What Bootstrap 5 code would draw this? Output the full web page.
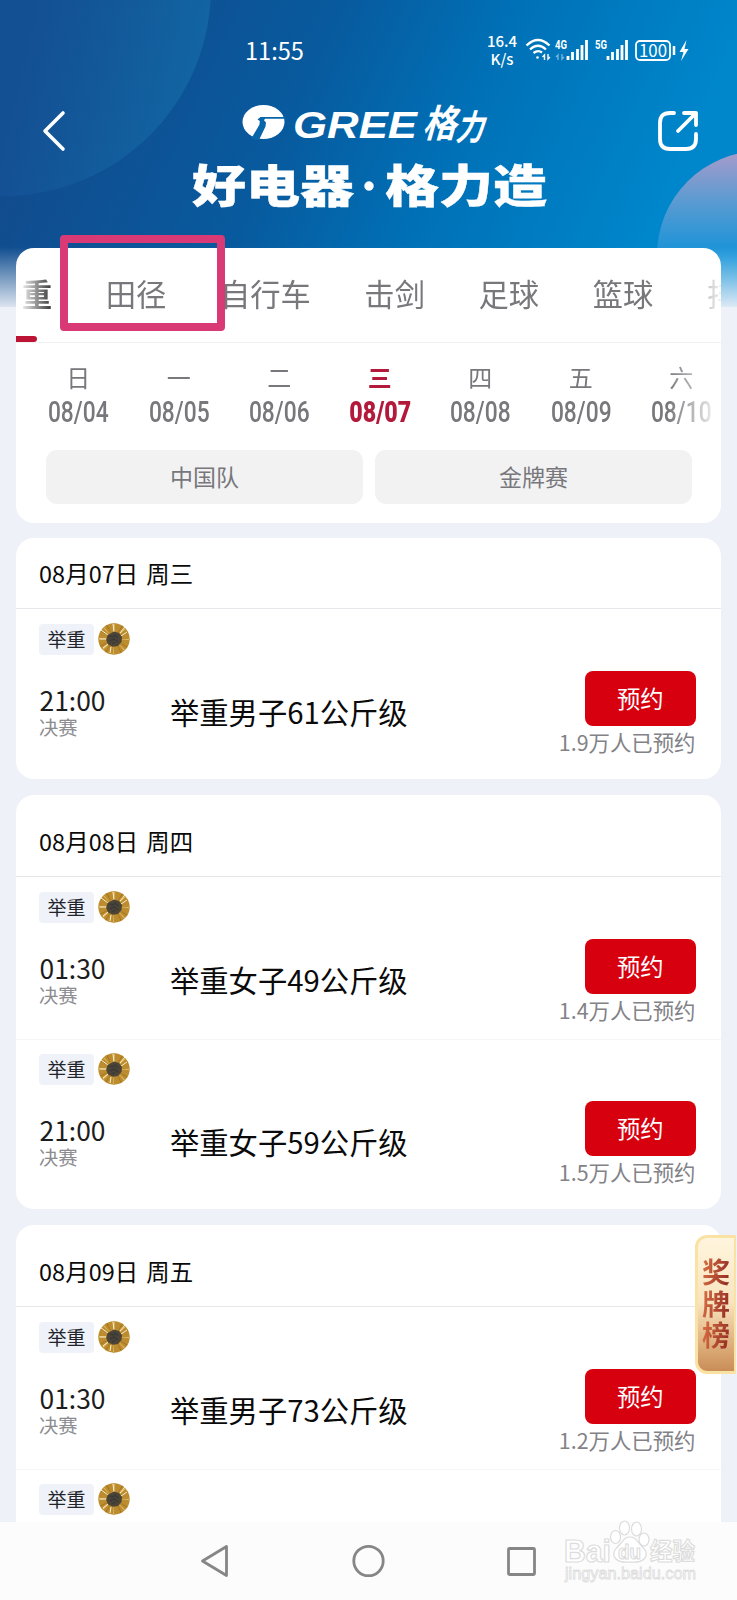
<!DOCTYPE html>
<html lang="zh-CN">
<head>
<meta charset="utf-8">
<meta name="viewport" content="width=device-width, initial-scale=1">
<title>赛程</title>
<link href="https://cdn.jsdelivr.net/npm/bootstrap@5.3.0/dist/css/bootstrap.min.css" rel="stylesheet">
<style>
  body { font-family: "Noto Sans CJK SC", sans-serif; background: #eef1f7; color: #0a0a0a; }
  .screen { height: 1600px; width: 737px; }
  .text-dim { color: #77777c; }
  .backdrop { height: 307px; z-index: 0; }
  .statusbar { height: 86px; padding: 32px 46px 0 245px; }
  .clock { font-size: 23.6px; line-height: 37px; }
  .speed { font-size: 15px; line-height: 18px; font-weight: 500; }
  .banner { height: 162px; padding: 16px 37px 0 40px; }
  .brand { margin: 0 auto 0 125px; }
  .panel { border-radius: 18px; margin: 0 16px; width: 705px; }
  .filter-panel { height: 275px; }
  .sport-tabs { height: 95px; border-bottom: 1px solid #f1f1f2; }
  .sport-scroll { gap: 53.6px; font-size: 30.3px; line-height: 90px; padding-left: 90px; margin-left: -84.500px;
    width: 790px; -webkit-mask-image: linear-gradient(90deg, transparent 87px, #000 123px, #000 748px, transparent 794px);
    mask-image: linear-gradient(90deg, transparent 87px, #000 123px, #000 748px, transparent 794px); }
  .sport-scroll .current { color: #222; font-weight: 700; margin-left: -30px; }
  .tab-mark { left: 0; bottom: 0; width: 21px; height: 6px; background: #bd1436; border-radius: 0 3px 3px 0; }
  .day-strip { height: 107px; padding: 16px 0 0 12px;
    -webkit-mask-image: linear-gradient(90deg, #000 652px, transparent 705px);
    mask-image: linear-gradient(90deg, #000 652px, transparent 705px); }
  .day { width: 100.5px; font-size: 24px; line-height: 35px; color: #77777c; }
  .day .num { display: block; font: 500 29px/37px Roboto, sans-serif; transform: scaleX(.785); }
  .day.today { color: #b3193a; font-weight: 700; }
  .day.today .num { font-weight: 900; transform: scaleX(.8); }
  .filters { padding: 0 29px 0 30px; gap: 12px; }
  .filter-btn { height: 54px; border: 0; border-radius: 11px; background: #f2f2f3; color: #77777c; font-size: 23px; line-height: 28px; padding-bottom: 9px; }
  .date-head { height: 71px; padding: 2px 23px 0; font-size: 23.4px; word-spacing: 2.5px; letter-spacing: .1px; border-bottom: 1px solid #e6e7ea; }
  .date-head.tall { height: 82px; padding-top: 13px; }
  .event { height: 162px; padding: 14px 25.5px 0 23px; }
  .sport-tag { height: 31px; width: 55px; font-size: 19px; line-height: 30px; background: #eff2f8; color: #22242c; border-radius: 4px; }
  .when { width: 131px; padding-top: 31px; }
  .clock-time { font-size: 26.4px; line-height: 28px; color: #1d1d20; padding-left: .5px; }
  .stage { font-size: 19.3px; line-height: 27px; color: #8b8b90; }
  .event + .event { box-shadow: inset 0 1px #f6f6f7; }
  .event-name { font-size: 29.3px; line-height: 40px; padding-top: 36px; }
  .book-btn { width: 110.5px; height: 55px; background: #d7000f; color: #fff; border: 0; border-radius: 8px; font-size: 23.3px; line-height: 28px; padding-bottom: 8px; }
  .booked { font-size: 21.4px; line-height: 31px; color: #828287; }
  .navbar-keys { height: 78px; background: #fcfcfc; bottom: 0; }
  .medal-flag { left: 695px; top: 1235px; width: 41px; height: 139px; border: 3px solid #f9e2a4; border-right-width: 2px; border-radius: 12px 0 0 12px; padding-bottom: 2px;
    background: linear-gradient(#fff5dd, #f8e4bf 48%, #deb07c 80%, #c98d57); }
  .medal-flag span { font-size: 28px; line-height: 31.5px; font-weight: 700; color: transparent;
    background: linear-gradient(100deg, #dc7245, #8e2822); -webkit-background-clip: text; background-clip: text; }
  .highlight-frame { left: 60px; top: 235px; width: 165px; height: 96px; border: 8px solid #d93a76; border-radius: 4px; }
  .watermark { left: 560px; top: 1516px; }
</style>
</head>
<body>
<svg width="0" height="0" class="position-absolute" aria-hidden="true">
  <defs>
    <symbol id="medal" viewBox="0 0 32 32">
      <circle cx="16" cy="16" r="15.7" fill="#bd8c2e"/>
      <g fill="none">
        <circle cx="16" cy="16" r="11.5" stroke="#9c7222" stroke-width="8" stroke-dasharray=".7 5.300"/>
        <circle cx="16" cy="16" r="11.5" stroke="#e2c372" stroke-width="7.500" stroke-dasharray=".7 8.300"/>
        <path d="M15 1l1 8M3 7l7 5M1.500 16l7 0M5 25l5-4M29 9l-6 4M27 4l-5 6M12 30l1-6" stroke="#fff4d0" stroke-width="1"/>
      </g>
      <path d="M16 8.500l5 1.500 3 4-.5 5-3.500 4-5 .8-5-2.300-1.800-4.500 1.300-5z" fill="#4c4537"/>
      <path d="M12 13l3 1 2-2 3 3M12 18l4-2 4 3M14 21l3-2" stroke="#38393a" stroke-width="1.500" fill="none"/>
    </symbol>
  </defs>
</svg>

<div class="screen position-relative overflow-hidden">
  <svg class="backdrop position-absolute top-0 start-0" width="737" height="307" viewBox="0 0 737 307" aria-hidden="true">
    <defs>
      <linearGradient id="sky" gradientUnits="userSpaceOnUse" x1="60" y1="70" x2="610" y2="320">
        <stop offset="0" stop-color="#114c8e"/><stop offset=".38" stop-color="#085a9e"/>
        <stop offset=".65" stop-color="#0071b7"/><stop offset="1" stop-color="#0086cb"/>
      </linearGradient>
      <linearGradient id="orbL" gradientUnits="userSpaceOnUse" x1="20" y1="60" x2="190" y2="100">
        <stop offset="0" stop-color="#134f93"/><stop offset="1" stop-color="#1264a2"/>
      </linearGradient>
      <linearGradient id="orbR" x1="0" y1="150" x2="0" y2="260" gradientUnits="userSpaceOnUse">
        <stop offset="0" stop-color="#aa9bcb"/><stop offset=".45" stop-color="#5d9bd1"/><stop offset="1" stop-color="#0f92d9"/>
      </linearGradient>
      <linearGradient id="fade" x1="0" y1="0" x2="0" y2="1">
        <stop offset="0" stop-color="#eef1f7" stop-opacity="0"/><stop offset="1" stop-color="#eef1f7" stop-opacity=".92"/>
      </linearGradient>
    </defs>
    <rect width="737" height="307" fill="url(#sky)"/>
    <circle cx="3" cy="-12" r="208" fill="url(#orbL)"/>
    <circle cx="761" cy="255" r="104" fill="url(#orbR)"/>
    <rect y="247" width="737" height="60" fill="url(#fade)"/>
  </svg>

  <header class="position-relative text-white">
    <div class="statusbar d-flex justify-content-between align-items-start">
      <div class="clock">11:55</div>
      <div class="d-flex align-items-start">
        <div class="speed text-center">16.4<br>K/s</div>
        <svg class="ms-2 mt-1" width="166" height="30" viewBox="0 4 166 30" fill="none" stroke="#fff">
          <g stroke-width="2.300">
            <path d="M1.500 13.500Q13 2.500 24.500 13.500M5 17.500Q13 10 21 17.500M8.500 21Q13 17.500 17 20.500"/>
            <circle cx="12.500" cy="25.500" r="1.300" fill="#fff" stroke="none"/>
          </g>
          <path d="M19.500 28v-5l-2 2M23 22v5l2-2" stroke-width="1.400"/>
          <text x="30" y="17" font-family="Roboto" font-weight="700" font-size="12.500" textLength="12" lengthAdjust="spacingAndGlyphs" fill="#fff" stroke="none">4G</text>
          <path d="M33 28v-5l-2 2M37 22v5l2-2" stroke-width="1.400" opacity=".45"/>
          <path d="M43 28v-4M47.500 28v-8M52.500 28v-11M57 28v-15M61.500 28v-20" stroke-width="2.800"/>
          <text x="70" y="17" font-family="Roboto" font-weight="700" font-size="12.500" textLength="12" lengthAdjust="spacingAndGlyphs" fill="#fff" stroke="none">5G</text>
          <path d="M83 28v-4M87.500 28v-8M92.500 28v-11M97 28v-15M101.500 28v-20" stroke-width="2.800"/>
          <rect x="111" y="9" width="34" height="19" rx="4" stroke-width="1.800"/>
          <path d="M149 14v9" stroke-width="2.500"/>
          <text x="114" y="24.500" font-family="Noto Sans CJK SC" font-size="17" textLength="28" lengthAdjust="spacingAndGlyphs" fill="#fff" stroke="none">100</text>
          <path d="M161.500 8l-7 12h4l-2.500 9 7.500-12h-4z" fill="#fff" stroke="none"/>
        </svg>
      </div>
    </div>
    <div class="banner d-flex justify-content-between align-items-start">
      <svg width="27" height="58" viewBox="0 0 27 58" fill="none" stroke="#fff" stroke-width="3.600" stroke-linecap="round" stroke-linejoin="round"><path d="M23 11L5 29l18 18"/></svg>
      <svg class="brand" width="360" height="112" viewBox="0 0 360 112" fill="#fff">
        <ellipse cx="71.500" cy="20" rx="21" ry="17"/>
        <path d="M68.500 15H94v1.800H73l-1 1.400 2 2.300-.5 4L67 38l-8-1 8.500-14.500.3-3.500-2.300-1.500z" fill="#0866ab"/>
        <text x="101" y="35.500" font-family="Liberation Sans" font-weight="700" font-style="italic" font-size="36" textLength="124" lengthAdjust="spacingAndGlyphs">GREE</text>
        <g transform="translate(226 0) skewX(-16)" font-family="Noto Sans CJK SC" font-weight="700">
          <text x="14" y="35" font-size="38" textLength="34" lengthAdjust="spacingAndGlyphs">格</text>
          <text x="48" y="38" font-size="35" textLength="28" lengthAdjust="spacingAndGlyphs">力</text>
        </g>
        <g font-family="Noto Sans CJK SC" font-weight="900" font-size="45" stroke="#fff" stroke-width=".4">
          <text x="0" y="100.500" textLength="162" lengthAdjust="spacingAndGlyphs">好电器</text>
          <circle cx="177" cy="84" r="4.500"/>
          <text x="193" y="100.500" textLength="162" lengthAdjust="spacingAndGlyphs">格力造</text>
        </g>
      </svg>
      <svg width="44" height="58" viewBox="0 0 44 58" fill="none" stroke="#fff" stroke-width="3.800" stroke-linecap="round" stroke-linejoin="round"><path d="M18 11h-4Q4 11 4 21v16Q4 47 14 47h16Q40 47 40 37v-5M22 29l18-18M28 11h12v12"/></svg>
    </div>
  </header>

  <section class="panel filter-panel bg-white position-relative">
    <nav class="sport-tabs position-relative overflow-hidden">
      <div class="sport-scroll d-flex text-nowrap text-dim">
        <span class="current">举重</span><span>田径</span><span>自行车</span><span>击剑</span><span>足球</span><span>篮球</span><span>排球</span>
      </div>
      <div class="tab-mark position-absolute"></div>
    </nav>
    <div class="day-strip d-flex text-center overflow-hidden">
      <div class="day flex-shrink-0">日<span class="num">08/04</span></div>
      <div class="day flex-shrink-0">一<span class="num">08/05</span></div>
      <div class="day flex-shrink-0">二<span class="num">08/06</span></div>
      <div class="day today flex-shrink-0">三<span class="num">08/07</span></div>
      <div class="day flex-shrink-0">四<span class="num">08/08</span></div>
      <div class="day flex-shrink-0">五<span class="num">08/09</span></div>
      <div class="day flex-shrink-0">六<span class="num">08/10</span></div>
    </div>
    <div class="filters d-flex">
      <button class="btn filter-btn flex-fill w-50">中国队</button>
      <button class="btn filter-btn flex-fill w-50">金牌赛</button>
    </div>
  </section>

  <section class="panel bg-white pb-2" style="margin-top:15px">
    <div class="date-head d-flex align-items-center">08月07日 周三</div>
    <article class="event">
      <div class="d-flex align-items-center gap-1"><span class="sport-tag text-center">举重</span><svg width="32" height="32"><use href="#medal"/></svg></div>
      <div class="d-flex">
        <div class="when"><div class="clock-time">21:00</div><div class="stage">决赛</div></div>
        <div class="event-name flex-grow-1">举重男子61公斤级</div>
        <div class="d-flex flex-column align-items-end pt-3"><button class="btn book-btn">预约</button><div class="booked">1.9万人已预约</div></div>
      </div>
    </article>
  </section>

  <section class="panel bg-white pb-2 mt-3">
    <div class="date-head tall d-flex align-items-center">08月08日 周四</div>
    <article class="event">
      <div class="d-flex align-items-center gap-1"><span class="sport-tag text-center">举重</span><svg width="32" height="32"><use href="#medal"/></svg></div>
      <div class="d-flex">
        <div class="when"><div class="clock-time">01:30</div><div class="stage">决赛</div></div>
        <div class="event-name flex-grow-1">举重女子49公斤级</div>
        <div class="d-flex flex-column align-items-end pt-3"><button class="btn book-btn">预约</button><div class="booked">1.4万人已预约</div></div>
      </div>
    </article>
    <article class="event">
      <div class="d-flex align-items-center gap-1"><span class="sport-tag text-center">举重</span><svg width="32" height="32"><use href="#medal"/></svg></div>
      <div class="d-flex">
        <div class="when"><div class="clock-time">21:00</div><div class="stage">决赛</div></div>
        <div class="event-name flex-grow-1">举重女子59公斤级</div>
        <div class="d-flex flex-column align-items-end pt-3"><button class="btn book-btn">预约</button><div class="booked">1.5万人已预约</div></div>
      </div>
    </article>
  </section>

  <section class="panel bg-white pb-2 mt-3">
    <div class="date-head tall d-flex align-items-center">08月09日 周五</div>
    <article class="event">
      <div class="d-flex align-items-center gap-1"><span class="sport-tag text-center">举重</span><svg width="32" height="32"><use href="#medal"/></svg></div>
      <div class="d-flex">
        <div class="when"><div class="clock-time">01:30</div><div class="stage">决赛</div></div>
        <div class="event-name flex-grow-1">举重男子73公斤级</div>
        <div class="d-flex flex-column align-items-end pt-3"><button class="btn book-btn">预约</button><div class="booked">1.2万人已预约</div></div>
      </div>
    </article>
    <article class="event">
      <div class="d-flex align-items-center gap-1"><span class="sport-tag text-center">举重</span><svg width="32" height="32"><use href="#medal"/></svg></div>
    </article>
  </section>

  <aside class="medal-flag position-absolute d-flex flex-column align-items-center justify-content-center"><span>奖</span><span>牌</span><span>榜</span></aside>
  <div class="highlight-frame position-absolute"></div>

  <footer class="navbar-keys position-absolute start-0 w-100 d-flex">
    <svg width="737" height="78" viewBox="0 0 737 78" fill="none" stroke="#868686" stroke-width="2.800" stroke-linejoin="round">
      <path d="M226.500 24.500v29L202.500 39z"/><circle cx="368.500" cy="39" r="14.700"/><rect x="508.500" y="26.500" width="26" height="26" rx="1"/>
    </svg>
  </footer>

  <svg class="watermark position-absolute" width="150" height="70" viewBox="0 0 150 70" fill="#fff" stroke="#dcdcdc" stroke-width="1.200">
    <text x="4" y="46" font-family="Liberation Sans" font-weight="700" font-size="31" textLength="47" lengthAdjust="spacingAndGlyphs">Bai</text>
    <ellipse cx="55.500" cy="21" rx="5" ry="6.500"/><ellipse cx="64.500" cy="12" rx="5" ry="7"/><ellipse cx="76.500" cy="13" rx="5" ry="7"/><ellipse cx="84" cy="23.500" rx="5" ry="6.500"/>
    <path d="M70 21q5 0 8 5 4 4 7 8 3 5-1 9-4 4-14 3-10 1-14-3-4-4-1-9 3-4 7-8 3-5 8-5z"/>
    <text x="58" y="43" font-family="Liberation Sans" font-weight="700" font-size="21" textLength="23" lengthAdjust="spacingAndGlyphs">du</text>
    <text x="90" y="44" font-family="Noto Sans CJK SC" font-weight="700" font-size="24" textLength="45" lengthAdjust="spacingAndGlyphs">经验</text>
    <text x="5" y="63" font-family="Liberation Sans" font-size="16" stroke-width=".8" textLength="131" lengthAdjust="spacingAndGlyphs">jingyan.baidu.com</text>
  </svg>
</div>
<script src="https://cdn.jsdelivr.net/npm/bootstrap@5.3.0/dist/js/bootstrap.bundle.min.js"></script>
</body>
</html>
